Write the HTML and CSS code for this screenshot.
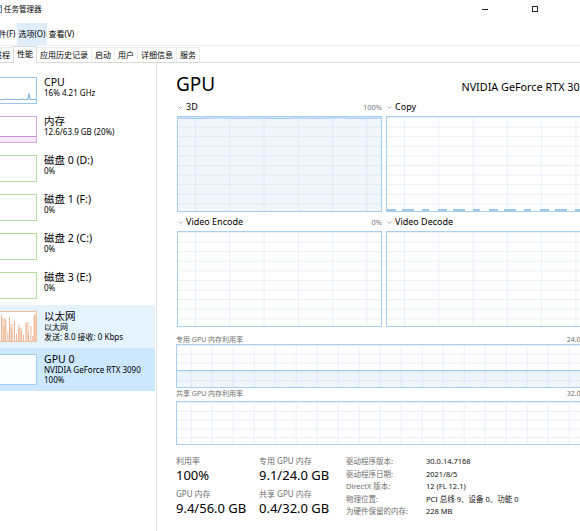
FILE: index.html
```html
<!DOCTYPE html>
<html lang="zh-CN">
<head>
<meta charset="utf-8">
<title>任务管理器</title>
<link rel="stylesheet" href="styles.css">
</head>
<body>
<div class="window">
  <header class="titlebar">
    <span class="app-icon"><svg width="9" height="8" viewBox="0 0 9 8"><rect x="0.5" y="0.5" width="8" height="7" fill="#e3edf7" stroke="#6c8aa8"/><polyline points="1.5,5.5 3.5,3.5 5,5 7.5,2" fill="none" stroke="#2f7fd1"/></svg></span>
    <span class="title">任务管理器</span>
    <span class="grow"></span>
    <span class="wctl"><svg width="6" height="1" viewBox="0 0 6 1"><rect width="6" height="1" fill="#222"/></svg></span>
    <span class="wctl"><svg width="6" height="6" viewBox="0 0 6 6"><rect x="0.5" y="0.5" width="5" height="5" fill="none" stroke="#222"/></svg></span>
    <span class="wctl"><svg width="7" height="7" viewBox="0 0 7 7"><path d="M0.5 0.5 L6.5 6.5 M6.5 0.5 L0.5 6.5" stroke="#222" fill="none"/></svg></span>
  </header>

  <nav class="menubar">
    <span class="menu">文件(F)</span>
    <span class="menu active">选项(O)</span>
    <span class="menu">查看(V)</span>
  </nav>

  <div class="tabs">
    <span class="tab">进程</span>
    <span class="tab selected">性能</span>
    <span class="tab">应用历史记录</span>
    <span class="tab">启动</span>
    <span class="tab">用户</span>
    <span class="tab">详细信息</span>
    <span class="tab">服务</span>
  </div>

  <div class="content">
    <aside class="sidebar">
      <div class="perf-item">
        <div class="thumb thumb-cpu"><svg viewBox="0 0 40 25" preserveAspectRatio="none"><polyline points="0,21.5 6,21.8 10,21.2 14,21.6 18,21.3 22,21.7 26,21.2 30,21.5 32,21.3 33,15.5 34,21.4 37,21.6 40,21.3" fill="none" stroke="#5a9fdc" stroke-width="0.8"/></svg></div>
        <div class="perf-text"><div class="perf-name">CPU</div><div class="perf-sub">16% 4.21 GHz</div></div>
      </div>
      <div class="perf-item">
        <div class="thumb thumb-mem"><div class="mem-fill" style="height:20%"></div></div>
        <div class="perf-text"><div class="perf-name">内存</div><div class="perf-sub">12.6/63.9 GB (20%)</div></div>
      </div>
      <div class="perf-item">
        <div class="thumb thumb-disk"></div>
        <div class="perf-text"><div class="perf-name">磁盘 0 (D:)</div><div class="perf-sub">0%</div></div>
      </div>
      <div class="perf-item">
        <div class="thumb thumb-disk"></div>
        <div class="perf-text"><div class="perf-name">磁盘 1 (F:)</div><div class="perf-sub">0%</div></div>
      </div>
      <div class="perf-item">
        <div class="thumb thumb-disk"></div>
        <div class="perf-text"><div class="perf-name">磁盘 2 (C:)</div><div class="perf-sub">0%</div></div>
      </div>
      <div class="perf-item">
        <div class="thumb thumb-disk"></div>
        <div class="perf-text"><div class="perf-name">磁盘 3 (E:)</div><div class="perf-sub">0%</div></div>
      </div>
      <div class="perf-item hover">
        <div class="thumb thumb-net"><svg viewBox="0 0 40 29" preserveAspectRatio="none">
          <g fill="#f6dcc8">
            <rect x="6" y="6" width="4" height="23"/><rect x="14" y="12" width="3" height="17"/><rect x="22" y="16" width="4" height="13"/><rect x="30" y="10" width="3" height="19"/><rect x="37" y="4" width="3" height="25"/>
          </g>
          <g fill="#e6a27a">
            <rect x="5" y="3" width="0.8" height="26"/><rect x="7.5" y="14" width="0.8" height="15"/><rect x="9.5" y="8" width="0.8" height="21"/><rect x="11.5" y="20" width="0.8" height="9"/><rect x="13" y="5" width="0.8" height="24"/><rect x="15.5" y="17" width="0.8" height="12"/><rect x="18" y="9" width="0.8" height="20"/><rect x="20" y="22" width="0.8" height="7"/><rect x="22.5" y="13" width="0.8" height="16"/><rect x="25" y="19" width="0.8" height="10"/><rect x="27" y="23" width="0.8" height="6"/><rect x="29.5" y="11" width="0.8" height="18"/><rect x="32" y="21" width="0.8" height="8"/><rect x="34.5" y="14" width="0.8" height="15"/><rect x="36.5" y="24" width="0.8" height="5"/><rect x="38.5" y="2" width="0.8" height="27"/>
          </g>
        </svg></div>
        <div class="perf-text"><div class="perf-name">以太网</div><div class="perf-sub">以太网</div><div class="perf-sub">发送: 8.0 接收: 0 Kbps</div></div>
      </div>
      <div class="perf-item selected">
        <div class="thumb thumb-gpu"></div>
        <div class="perf-text"><div class="perf-name">GPU 0</div><div class="perf-sub">NVIDIA GeForce RTX 3090</div><div class="perf-sub">100%</div></div>
      </div>
    </aside>

    <main class="main">
      <div class="heading">
        <h1 class="heading-title">GPU</h1>
        <div class="heading-model">NVIDIA GeForce RTX 3090</div>
      </div>

      <div class="engines">
        <section class="engine">
          <div class="engine-head"><span class="chev"><svg width="5" height="3" viewBox="0 0 5 3"><polyline points="0.5,0.5 2.5,2.5 4.5,0.5" fill="none" stroke="#9a9a9a" stroke-width="0.8"/></svg></span><span class="engine-name">3D</span><span class="engine-pct">100%</span></div>
          <div class="chart chart-full"><svg viewBox="0 0 203 94" preserveAspectRatio="none"><polyline points="0,1.2 20,1.6 40,0.9 60,1.5 80,1.1 100,1.7 120,1 140,1.4 160,0.8 180,1.5 203,1.1" fill="none" stroke="#9cc8ea" stroke-width="1"/></svg></div>
        </section>
        <section class="engine">
          <div class="engine-head"><span class="chev"><svg width="5" height="3" viewBox="0 0 5 3"><polyline points="0.5,0.5 2.5,2.5 4.5,0.5" fill="none" stroke="#9a9a9a" stroke-width="0.8"/></svg></span><span class="engine-name">Copy</span><span class="engine-pct">0%</span></div>
          <div class="chart"><svg viewBox="0 0 203 94" preserveAspectRatio="none"><polyline points="0,93 203,93" fill="none" stroke="#7db6e4" stroke-width="1.4" stroke-dasharray="9 6 12 8 7 9"/></svg></div>
        </section>
        <section class="engine">
          <div class="engine-head"><span class="chev"><svg width="5" height="3" viewBox="0 0 5 3"><polyline points="0.5,0.5 2.5,2.5 4.5,0.5" fill="none" stroke="#9a9a9a" stroke-width="0.8"/></svg></span><span class="engine-name">Video Encode</span><span class="engine-pct">0%</span></div>
          <div class="chart"></div>
        </section>
        <section class="engine">
          <div class="engine-head"><span class="chev"><svg width="5" height="3" viewBox="0 0 5 3"><polyline points="0.5,0.5 2.5,2.5 4.5,0.5" fill="none" stroke="#9a9a9a" stroke-width="0.8"/></svg></span><span class="engine-name">Video Decode</span><span class="engine-pct">0%</span></div>
          <div class="chart"></div>
        </section>
      </div>

      <div class="mem-head mem-head-first"><span>专用 GPU 内存利用率</span><span>24.0 GB</span></div>
      <div class="mem-chart"><div class="mem-chart-fill" style="height:38%"></div></div>
      <div class="mem-head"><span>共享 GPU 内存利用率</span><span>32.0 GB</span></div>
      <div class="mem-chart mem-chart-second"></div>

      <div class="stats">
        <div class="stat-col stat-a">
          <div class="stat-label">利用率</div>
          <div class="stat-value">100%</div>
          <div class="stat-label stat-gap">GPU 内存</div>
          <div class="stat-value">9.4/56.0 GB</div>
        </div>
        <div class="stat-col stat-b">
          <div class="stat-label">专用 GPU 内存</div>
          <div class="stat-value">9.1/24.0 GB</div>
          <div class="stat-label stat-gap">共享 GPU 内存</div>
          <div class="stat-value">0.4/32.0 GB</div>
        </div>
        <div class="stat-col stat-c">
          <div class="info-label">驱动程序版本:</div>
          <div class="info-label">驱动程序日期:</div>
          <div class="info-label">DirectX 版本:</div>
          <div class="info-label">物理位置:</div>
          <div class="info-label">为硬件保留的内存:</div>
        </div>
        <div class="stat-col stat-d">
          <div class="info-value">30.0.14.7168</div>
          <div class="info-value">2021/8/5</div>
          <div class="info-value">12 (FL 12.1)</div>
          <div class="info-value">PCI 总线 9、设备 0、功能 0</div>
          <div class="info-value">228 MB</div>
        </div>
      </div>
    </main>
  </div>
</div>
</body>
</html>
```

FILE: styles.css
```css
html, body {
  margin: 0;
  padding: 0;
  background: #ffffff;
  overflow: hidden;
}

body {
  width: 580px;
  height: 531px;
  font-family: "Noto Sans", "Noto Sans CJK SC", sans-serif;
  color: #000;
}

.window {
  margin-left: -9px;
  width: 619px;
  height: 531px;
  display: flex;
  flex-direction: column;
  background: #fff;
}

/* title bar */
.titlebar {
  flex: none;
  height: 23px;
  display: flex;
  align-items: flex-start;
}
.app-icon {
  margin-left: 2px;
  width: 9px;
  height: 18px;
  display: flex;
  align-items: center;
}
.app-icon svg { display: block; }
.title {
  margin-left: 2px;
  font-size: 7.5px;
  line-height: 18px;
}
.grow { flex: 1; }
.wctl {
  width: 50px;
  height: 18px;
  display: flex;
  align-items: center;
  justify-content: center;
}
.wctl svg { display: block; }

/* menu */
.menubar {
  flex: none;
  display: flex;
  height: 22px;
  margin-left: -2px;
  border-bottom: 1px solid #f0f0f0;
}
.menu {
  font-size: 8px;
  line-height: 22px;
  padding: 0 1.5px;
}
.menu.active { background: #e0eefc; }

/* tabs */
.tabs {
  flex: none;
  display: flex;
  align-items: flex-end;
  margin-left: -1px;
  padding-top: 1px;
  height: 15px;
  border-bottom: 1px solid #d9d9d9;
}
.tab {
  font-size: 8px;
  line-height: 14px;
  padding: 0 3px;
  border: 1px solid #ececec;
  border-bottom: none;
  margin-right: -1px;
  color: #000;
  background: #fff;
}
.tab.selected {
  position: relative;
  z-index: 1;
  border-color: #d9d9d9;
  margin-top: -1px;
  padding-bottom: 2px;
  margin-bottom: -1px;
}

/* body */
.content {
  flex: 1;
  display: flex;
  min-height: 0;
}

.sidebar {
  flex: none;
  width: 166px;
  box-sizing: border-box;
  padding: 8px 1px 0 0;
  border-right: 1px solid #e3e3e3;
}
.perf-item {
  display: flex;
  padding: 6px 0 6px 4px;
}
.perf-item.hover { background: #e5f3ff; }
.perf-item.selected { background: #cce8ff; }
.thumb {
  flex: none;
  width: 42px;
  box-sizing: border-box;
  margin-right: 7px;
  border: 1px solid #9cc8ec;
  background: #fff;
  display: flex;
  flex-direction: column;
  justify-content: flex-end;
}
.thumb svg { display: block; width: 100%; height: 100%; }
.thumb-mem { border-color: #d6a6e2; }
.mem-fill {
  background: #f6eaf9;
  border-top: 1px solid #c78fd8;
}
.thumb-disk { border-color: #b4dc9f; }
.thumb-net { border-color: #efbf9e; }
.thumb-gpu { border-color: #a4cbeb; background: #fbfdff; }

.perf-text {
  min-height: 27px;
  white-space: nowrap;
}
.perf-name {
  font-size: 10.5px;
  line-height: 11px;
}
.perf-sub {
  font-size: 8px;
  line-height: 10px;
}

/* main */
.main {
  flex: 1;
  min-width: 0;
  padding: 9px 18px 0 19px;
}
.heading {
  display: flex;
  justify-content: space-between;
  align-items: baseline;
  height: 24px;
}
.heading-title {
  margin: 0;
  font-size: 19px;
  font-weight: normal;
  line-height: 24px;
}
.heading-model {
  font-size: 10.8px;
  line-height: 14px;
  margin-right: 0;
  white-space: nowrap;
}

.engines {
  margin: 4px 0 0 1px;
  display: grid;
  grid-template-columns: 205px 205px;
  column-gap: 4px;
  row-gap: 3px;
}
.engine-head {
  display: flex;
  align-items: center;
  height: 14px;
  margin-bottom: 2px;
}
.chev {
  margin: 0 3px 0 1px;
  display: flex;
}
.chev svg { display: block; }
.engine-name {
  font-size: 9px;
  line-height: 14px;
  flex: 1;
}
.engine-pct {
  font-size: 7.5px;
  color: #777;
  line-height: 14px;
}

.chart {
  height: 96px;
  box-sizing: border-box;
  border: 1px solid #a9cfee;
  background-color: #fff;
  background-image:
    linear-gradient(to right, #e8f0f8 1px, transparent 1px),
    linear-gradient(to bottom, #e8f0f8 1px, transparent 1px);
  background-size: 34.3px 100%, 100% 9.6px;
  background-position: 17px 0, 0 0;
}
.chart svg { display: block; width: 100%; height: 100%; }
.chart-full {
  background-color: #f0f6fc;
  background-image:
    linear-gradient(to right, #dde9f4 1px, transparent 1px),
    linear-gradient(to bottom, #dde9f4 1px, transparent 1px);
}

.mem-head {
  display: flex;
  justify-content: space-between;
  font-size: 7px;
  line-height: 9px;
  color: #6e6e6e;
  margin-top: 1px;
  margin-bottom: 3px;
}
.mem-head-first {
  margin-top: 8px;
  margin-bottom: 0;
}
.mem-chart {
  height: 44px;
  box-sizing: border-box;
  border: 1px solid #a9cfee;
  background-color: #fff;
  background-image:
    linear-gradient(to right, #e8f0f8 1px, transparent 1px),
    linear-gradient(to bottom, #e8f0f8 1px, transparent 1px);
  background-size: 21px 100%, 100% 8.8px;
  background-position: 13.7px 0, 0 0;
  display: flex;
  flex-direction: column;
  justify-content: flex-end;
}
.mem-chart-fill {
  background: rgba(160, 200, 235, 0.18);
  border-top: 1px solid #a2cbeb;
}

/* stats */
.stats {
  display: flex;
  margin-top: 10px;
}
.stat-col { flex: none; }
.stat-a { width: 83px; }
.stat-b { width: 87px; }
.stat-c { width: 80px; }
.stat-label {
  font-size: 8px;
  line-height: 10px;
  color: #6e6e6e;
  margin-top: 1px;
}
.stat-gap { margin-top: 5px; }
.stat-value {
  font-size: 13px;
  line-height: 18px;
}
.info-label {
  font-size: 7.5px;
  line-height: 12.5px;
  color: #6e6e6e;
  white-space: nowrap;
}
.info-value {
  font-size: 7.5px;
  line-height: 12.5px;
  color: #111;
  white-space: nowrap;
}
```
